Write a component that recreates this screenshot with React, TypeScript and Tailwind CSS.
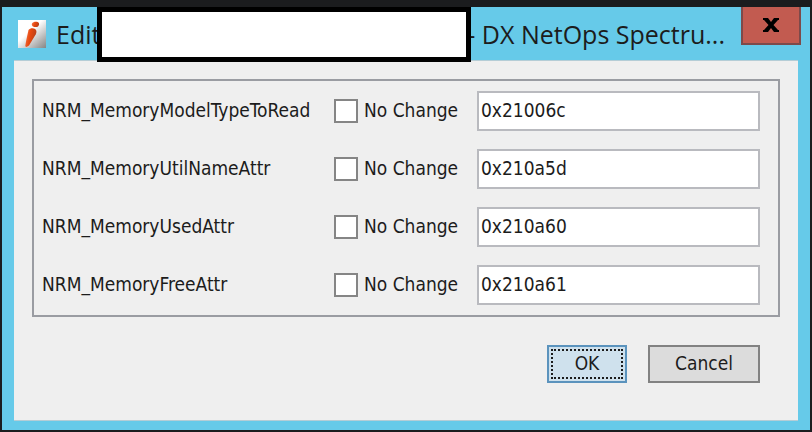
import { useState } from 'react';

interface Attribute {
    name: string;
    value: string;
}

const ATTRIBUTES: Attribute[] = [
    { name: 'NRM_MemoryModelTypeToRead', value: '0x21006c' },
    { name: 'NRM_MemoryUtilNameAttr', value: '0x210a5d' },
    { name: 'NRM_MemoryUsedAttr', value: '0x210a60' },
    { name: 'NRM_MemoryFreeAttr', value: '0x210a61' },
];

function AppIcon() {
    return (
        <svg viewBox="0 0 28 28" className="h-7 w-7 shrink-0" aria-hidden="true">
            <defs>
                <linearGradient id="tile" x1="0.2" y1="0.1" x2="1" y2="1">
                    <stop offset="0.3" stopColor="#ffffff" />
                    <stop offset="1" stopColor="#858585" />
                </linearGradient>
                <linearGradient id="body" x1="0" y1="0" x2="1" y2="0.3">
                    <stop offset="0" stopColor="#f47a4c" />
                    <stop offset="0.5" stopColor="#e8480f" />
                    <stop offset="1" stopColor="#b8401a" />
                </linearGradient>
            </defs>
            <rect width="28" height="28" fill="url(#tile)" />
            <path d="M14 3.500C15 1.500 19.800 1.300 20.900 3c.7 1.500-.4 3.400-1.300 3.800-1.200.6-4.200.2-5-.6-.7-.7-1-1.700-.6-2.700z" fill="url(#body)" />
            <path d="M10.500 10c1.300-1.800 4.600-2.200 6.600-1.100 1.700 1 1.600 3.400.7 5.300L11 25.500 8.500 27l-1.300-.8L8.300 20z" fill="url(#body)" />
        </svg>
    );
}

function AttributeRow({ name, value }: Attribute) {
    const [noChange, setNoChange] = useState(false);
    const [text, setText] = useState(value);

    return (
        <div className="flex items-center">
            <label htmlFor={name} className="w-[292px] shrink-0 pb-[3px]">{name}</label>
            <label className="flex w-[143px] shrink-0 items-center gap-1.5">
                <input
                    type="checkbox"
                    checked={noChange}
                    onChange={(e) => setNoChange(e.target.checked)}
                    className="h-6 w-6 appearance-none border-2 border-[#858585] bg-white checked:bg-[#4b8ab8]"
                />
                <span className="pb-[3px]">No Change</span>
            </label>
            <input
                id={name}
                type="text"
                value={text}
                disabled={noChange}
                onChange={(e) => setText(e.target.value)}
                className="h-10 min-w-0 flex-1 border-2 border-[#b9babf] bg-white px-0.5 pb-[3px] outline-none"
            />
        </div>
    );
}

export default function App() {
    return (
        <div className="min-h-screen bg-[#1b1c1e] pt-[7px] pr-0.5 pb-[3px] pl-0.5 font-['DejaVu_Sans_Condensed','DejaVu_Sans',sans-serif] text-[19px] leading-7 text-[#1c1c1c]">
            <div className="bg-[#66cae9] px-3 pb-[9px]">
                {/* Title bar */}
                <header className="relative flex h-[53px] items-start">
                    <div className="flex h-full min-w-0 flex-1 items-center gap-2.5 pl-1">
                        <AppIcon />
                        <h1 className="flex min-w-0 flex-1 justify-between pr-4 font-['Open_Sans',sans-serif] text-[25px] whitespace-nowrap">
                            <span>Edit</span>
                            <span>- DX NetOps Spectru...</span>
                        </h1>
                    </div>
                    <button
                        type="button"
                        aria-label="Close"
                        className="-mr-[3px] flex h-[38px] w-[60px] shrink-0 items-center justify-center border-2 border-t-0 border-[#7d4a4a] bg-[#c25b50]"
                    >
                        <svg viewBox="0 0 18 16" className="h-4 w-[18px]" aria-hidden="true">
                            <path d="M1 1h5l3 4 3-4h5v2h-1l-4.500 5 4.500 5h1v2h-5L9 11l-3 4H1v-2h1l4.500-5L2 3H1z" fill="#000" />
                        </svg>
                    </button>
                    {/* Blanked out device name */}
                    <div className="absolute top-0 right-[327px] -bottom-0.5 left-[83px] z-10 border-5 border-black bg-white" />
                </header>

                <main className="border-t border-b border-[#b5cdd6] bg-[#efefef] px-[18px] pt-[18px] pb-[37px]">
                    <div className="flex flex-col gap-[18px] border-2 border-[#9a9ca2] py-[10px] pr-[18px] pl-2">
                        {ATTRIBUTES.map((attr) => (
                            <AttributeRow key={attr.name} {...attr} />
                        ))}
                    </div>

                    <div className="mt-7 flex justify-end gap-[21px] pr-5">
                        <button type="button" className="h-[38px] w-20 border-2 border-[#5b93bd] bg-[#cfe1ed] p-0.5">
                            <span className="flex h-full items-center justify-center border-2 border-dotted border-[#1c1c1c] pb-[3px]">OK</span>
                        </button>
                        <button type="button" className="h-[38px] w-28 border-2 border-[#828282] bg-[#dcdcdc] pb-[3px]">
                            Cancel
                        </button>
                    </div>
                </main>
            </div>
        </div>
    );
}
